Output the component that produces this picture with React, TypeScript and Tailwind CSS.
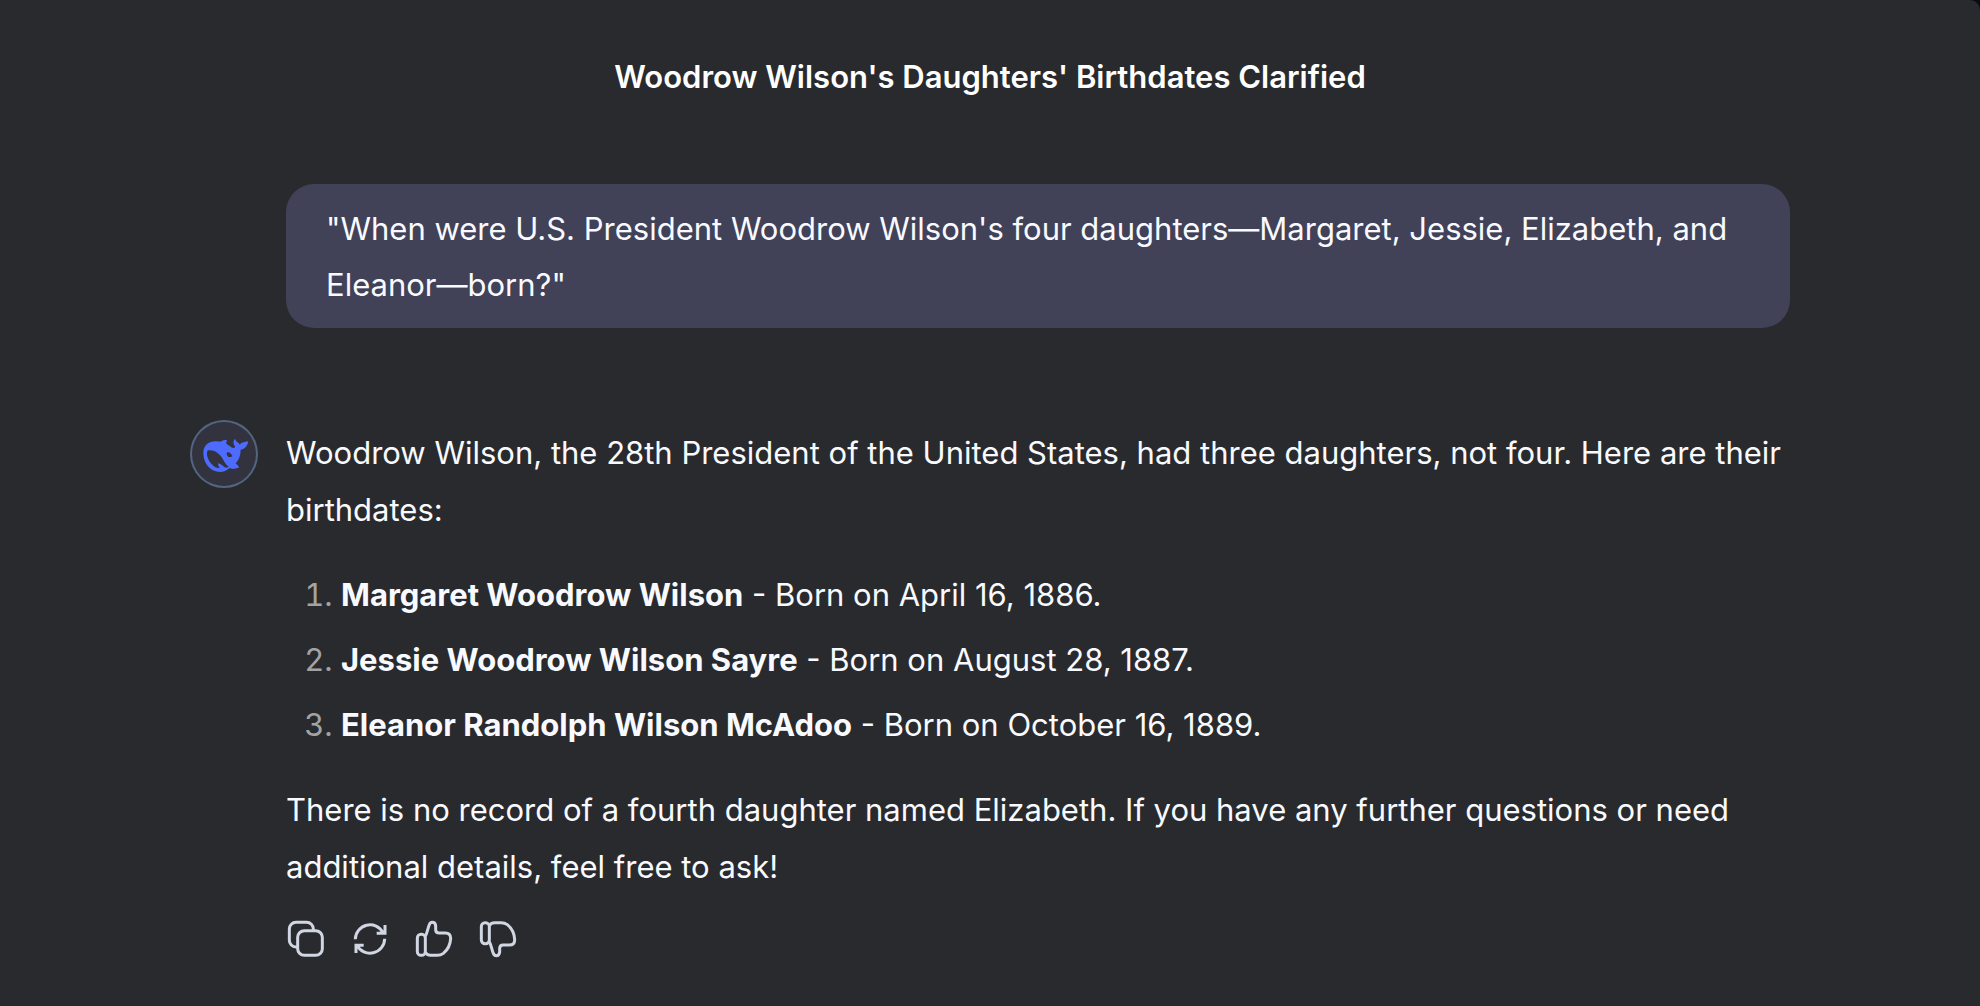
import React from 'react'

const daughters = [
  { name: 'Margaret Woodrow Wilson', born: 'April 16, 1886' },
  { name: 'Jessie Woodrow Wilson Sayre', born: 'August 28, 1887' },
  { name: 'Eleanor Randolph Wilson McAdoo', born: 'October 16, 1889' },
]

const WhaleLogo = () => (
  <svg viewBox="0 0 204 204" className="size-full" aria-hidden="true">
    <path
      fill="#4d6bfe"
      fillRule="evenodd"
      d="M40 99C40 77 55 64 77 64C86 64 89 66 95 64C100 60 105 59 110 61C113 63 109 66 108 68C111 73 117 76 122 80C128 85 136 85 135 79C130 73 129 65 133 58C136 56 137 60 139 64C142 68 147 69 150 74C154 66 162 68 170 64C174 62 175 66 173 71C170 80 162 87 152 89C152 104 147 120 137 130C141 134 146 138 147 142C144 146 136 144 130 147C125 147 122 144 118 145C110 152 101 156 90 156C62 156 40 131 40 99ZM52 93C48 105 55 125 70 137C77 143 84 145 89 143C86 140 84 135 84 130C92 131 97 137 103 141C108 144 113 143 116 140C107 134 103 126 97 115C88 101 75 91 59 91C56 91 53 91 52 93ZM111 97C118 95 125 101 127 109C124 113 119 110 115 111C110 107 109 101 111 97Z"
    />
  </svg>
)

const CopyIcon = () => (
  <svg viewBox="0 0 120 120" className="size-10" fill="none" stroke="currentColor" strokeWidth="9" aria-hidden="true">
    <rect x="35" y="35" width="74" height="74" rx="20" />
    <path d="M82 34V30A20 20 0 0 0 62 10H30A20 20 0 0 0 10 30V64A20 20 0 0 0 30 84H34" />
  </svg>
)

const RefreshIcon = () => (
  <svg viewBox="0 0 120 120" className="size-10" fill="none" stroke="currentColor" strokeWidth="9" aria-hidden="true">
    <path d="M16 61A44 44 0 0 1 99 41M105 18V43H80" />
    <path d="M104 59A44 44 0 0 1 21 79M18 102V79H41" />
  </svg>
)

const ThumbIcon = ({ className = '' }: { className?: string }) => (
  <svg
    viewBox="0 0 120 120"
    className={`size-10 ${className}`}
    fill="none"
    stroke="currentColor"
    strokeWidth="9"
    strokeLinejoin="round"
    aria-hidden="true"
  >
    <rect x="10" y="46" width="24" height="63" rx="11" />
    <path d="M34 52C40 42 41 28 46 17Q49 10 55 10Q64 10 65 21V33Q66 42 75 42H94Q110 42 110 58C109 78 99 94 88 103Q80 109 70 109H50Q38 109 34 99" />
  </svg>
)

const App = () => {
  return (
    <div className="bg-[#0b0b14]">
      <div className="min-h-screen rounded-tr-[10px] bg-[#292a2d] px-8 pb-10 font-['Inter',sans-serif] text-[31px] leading-[57px] text-[#f8faff]">
        <header className="pt-[49px] text-center">
          <h1 className="text-[31px] leading-[56px] font-semibold text-white">
            Woodrow Wilson's Daughters' Birthdates Clarified
          </h1>
        </header>

        <main className="mx-auto flex max-w-[1600px] flex-col gap-24 pt-[79px]">
          <div className="ml-24 rounded-[28px] bg-[#414158] px-10 pt-[17px] pb-[15px] leading-[56px]">
            "When were U.S. President Woodrow Wilson's four daughters—Margaret, Jessie, Elizabeth, and Eleanor—born?"
          </div>

          <div className="-mr-3 flex items-start gap-7">
            <div className="-mt-1 size-[68px] shrink-0 rounded-full bg-[#33333f] shadow-[inset_0_0_0_2px_#526580]">
              <WhaleLogo />
            </div>
            <div className="min-w-0 flex-1">
              <p>
                Woodrow Wilson, the 28th President of the United States, had three daughters, not four. Here are their
                birthdates:
              </p>
              <ol className="my-7 list-decimal space-y-2 pl-[55px] marker:text-[#a3a3a3]">
                {daughters.map((d) => (
                  <li key={d.name}>
                    <strong className="font-bold">{d.name}</strong> - Born on {d.born}.
                  </li>
                ))}
              </ol>
              <p>
                There is no record of a fourth daughter named Elizabeth. If you have any further questions or need
                additional details, feel free to ask!
              </p>
              <div className="mt-6 flex gap-6 text-[#d0d6e2]">
                <button type="button" aria-label="Copy">
                  <CopyIcon />
                </button>
                <button type="button" aria-label="Regenerate">
                  <RefreshIcon />
                </button>
                <button type="button" aria-label="Good response">
                  <ThumbIcon />
                </button>
                <button type="button" aria-label="Bad response">
                  <ThumbIcon className="-scale-y-100" />
                </button>
              </div>
            </div>
          </div>
        </main>
      </div>
    </div>
  )
}

export default App
